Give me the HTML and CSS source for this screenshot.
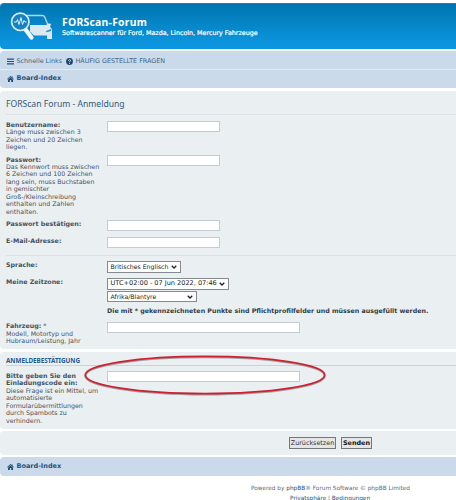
FILE: index.html
```html
<!DOCTYPE html>
<html lang="de">
<head>
<meta charset="utf-8">
<title>FORScan-Forum</title>
<link rel="stylesheet" href="styles.css">
</head>
<body>
<header class="headerbar">
  <svg class="logo" viewBox="0 0 44 32" aria-hidden="true">
    <path d="M17 3.500h15.500q1.500 0 2.200 1.500L38 13" fill="none" stroke="#b5d6e8" stroke-width="1.400"/>
    <path d="M20 13h16l2.500-1.500q2.500-.3 2.500 1L40 14.500q2 2 2 4.500v8h-5v-3.500H24l-4-4z" fill="#dce8ef"/>
    <path d="M36 19l5-2v2l-4.500 1.200z" fill="#2b8fc6"/>
    <path d="M15.500 17.500L21.500 25.500" stroke="#f5fbff" stroke-width="4.200" stroke-linecap="round"/>
    <circle cx="10.300" cy="9.800" r="8.700" fill="#1583c1" stroke="#d9edf7" stroke-width="1.700"/>
    <path d="M4 10h2.500l1-2.500 1.500 5 2-7 1.500 7 1.500-4 1 1.500h1.500" fill="none" stroke="#d9edf7" stroke-width="1"/>
  </svg>
  <div class="site">
    <h1>FORScan-Forum</h1>
    <p>Softwarescanner für Ford, Mazda, Lincoln, Mercury Fahrzeuge</p>
  </div>
</header>
<nav class="navbar">
  <div class="nav-row nav-links">
    <svg class="bars" viewBox="0 0 8 8"><path d="M0 1.200h8M0 4h8M0 6.800h8" stroke="#20527c" stroke-width="1.400"/></svg>
    <a class="quick">Schnelle Links</a>
    <svg class="help" viewBox="0 0 8 8"><circle cx="4" cy="4" r="3.900" fill="#17476e"/><path d="M2.800 3c.2-1.500 2.500-1.300 2.400 0C5.200 3.800 4 3.700 4 4.800M4 5.600v1" fill="none" stroke="#fff" stroke-width="1"/></svg>
    <a class="faq">HÄUFIG GESTELLTE FRAGEN</a>
  </div>
  <div class="nav-row crumb">
    <svg class="home" viewBox="0 0 8 7"><path d="M4 0l1.500 1.300V.5h1v1.700L8 3.600l-.5.500L4 1.100.5 4.100 0 3.600zM4 1.800l2.900 2.500V7H4.800V4.800H3.200V7H1.100V4.300z" fill="#17476e"/></svg>
    <a>Board-Index</a>
  </div>
</nav>
<form>
  <section class="panel main-panel">
    <h2>FORScan Forum - Anmeldung</h2>
    <div class="fields account">
      <div class="label"><b>Benutzername:</b><br>Länge muss zwischen 3<br>Zeichen und 20 Zeichen<br>liegen.</div><input type="text">
      <div class="label"><b>Passwort:</b><br>Das Kennwort muss zwischen<br>6 Zeichen und 100 Zeichen<br>lang sein, muss Buchstaben<br>in gemischter<br>Groß-/Kleinschreibung<br>enthalten und Zahlen<br>enthalten.</div><input type="password">
      <div class="label"><b>Passwort bestätigen:</b></div><input type="password">
      <div class="label"><b>E-Mail-Adresse:</b></div><input type="text">
    </div>
    <div class="fields profile">
      <div class="label"><b>Sprache:</b></div>
      <div class="select language"><span>Britisches Englisch</span><svg viewBox="0 0 6 4"><path d="M.7.700L3 3 5.300.7"/></svg></div>
      <div class="label"><b>Meine Zeitzone:</b></div>
      <div class="zones">
        <div class="select offset"><span>UTC+02:00 - 07 Jun 2022, 07:46</span><svg viewBox="0 0 6 4"><path d="M.7.700L3 3 5.300.7"/></svg></div>
        <div class="select city"><span>Afrika/Blantyre</span><svg viewBox="0 0 6 4"><path d="M.7.700L3 3 5.300.7"/></svg></div>
      </div>
      <p class="notice">Die mit * gekennzeichneten Punkte sind Pflichtprofilfelder und müssen ausgefüllt werden.</p>
      <div class="label vehicle"><b>Fahrzeug:</b> *<br>Modell, Motortyp und<br>Hubraum/Leistung, Jahr</div><input class="wide" type="text">
    </div>
  </section>
  <section class="panel confirm-panel">
    <h3>ANMELDEBESTÄTIGUNG</h3>
    <div class="fields confirm">
      <div class="label"><b>Bitte geben Sie den<br>Einladungscode ein:</b><br>Diese Frage ist ein Mittel, um<br>automatisierte<br>Formularübermittlungen<br>durch Spambots zu<br>verhindern.</div><input class="wide" type="text">
    </div>
    <svg class="marker" viewBox="0 0 246 44"><ellipse cx="121" cy="20" rx="119.700" ry="18.600"/></svg>
  </section>
  <section class="panel actions">
    <button type="reset">Zurücksetzen</button>
    <button type="button" class="submit">Senden</button>
  </section>
</form>
<nav class="footbar crumb">
  <svg class="home" viewBox="0 0 8 7"><path d="M4 0l1.500 1.300V.5h1v1.700L8 3.600l-.5.500L4 1.100.5 4.100 0 3.600zM4 1.800l2.900 2.500V7H4.800V4.800H3.200V7H1.100V4.300z" fill="#17476e"/></svg>
  <a>Board-Index</a>
</nav>
<footer>
  <p>Powered by <a>phpBB</a>® Forum Software © phpBB Limited</p>
  <p class="legal"><a>Privatsphäre</a> | <a>Bedingungen</a></p>
</footer>
</body>
</html>
```
FILE: styles.css
```css
* { box-sizing: border-box; }
body {
  margin: 0;
  padding-top: 3px;
  height: 500px;
  overflow: hidden;
  background: #fff;
  color: #48525d;
  font: 6.3px/7.43px "DejaVu Sans", Verdana, sans-serif;
}
h1, h2, h3, p { margin: 0; white-space: nowrap; }
svg { display: block; flex: none; }
a { color: #24527b; }

.headerbar {
  display: flex;
  height: 46px;
  padding: 8px 0 0 10px;
  border-top: 1px solid #35799e;
  border-radius: 4px 0 0 4px;
  background: linear-gradient(#0075b0, #0c96df 90%, #0c96df);
  color: #fff;
}
.logo { width: 44px; height: 32px; }
.site { padding: 3px 0 0 8px; }
h1 { font: bold 10.4px/14px "Noto Sans", sans-serif; letter-spacing: .25px; }
.site p { font-size: 6.35px; -webkit-text-stroke: .2px #fff; line-height: 7px; }

.navbar {
  height: 37px;
  margin: 2px 0 3px;
  border-radius: 4px 0 0 4px;
  background: #cadaeb;
}
.nav-row { display: flex; align-items: center; height: 18px; padding-left: 7px; }
.nav-links { height: 19px; padding-top: 3px; border-bottom: 1px solid #dfebf5; }
.bars { width: 7px; height: 7px; margin-right: 2.5px; }
.help { width: 7px; height: 7px; margin: 0 3px 0 3.5px; }
.nav-links a { font-size: 6.4px; color: #426486; white-space: nowrap; }
.home { width: 7px; height: 6px; margin-right: 2.5px; }
.crumb a { font-size: 6.5px; font-weight: bold; }

.panel { background: #eaeff2; border-radius: 4px 0 0 4px; padding-left: 6px; }
.main-panel { height: 258px; }
h2 {
  height: 24px;
  padding-top: 8px;
  border-bottom: 1px solid #dce2e5;
  color: #36587b;
  font: 8.6px/10px "Noto Sans", sans-serif;
}
.fields { display: grid; grid-template-columns: 101px 1fr; align-items: start; }
.label { white-space: nowrap; }
.account {
  grid-template-rows: 34.500px 64.500px 17.200px 17px;
  height: 141px;
  padding-top: 6px;
  border-bottom: 1px solid #dce2e5;
}
input {
  width: 113px;
  height: 11px;
  padding: 0 2px;
  border: 1px solid #c5ccd1;
  background: #fff;
  font: inherit;
}
.account input { margin-top: -.4px; }
.wide { width: 193px; height: 11px; }
.profile { grid-template-rows: 17.200px 29px 15px 24px; padding-top: 5px; }
.select {
  display: flex;
  align-items: center;
  justify-content: space-between;
  height: 12px;
  padding: 0 3px 0 2.5px;
  border: 1px solid #858b90;
  background: #fff;
  color: #222;
  font-size: 6.2px;
  white-space: nowrap;
}
.select svg { width: 6px; height: 4px; }
.select path { fill: none; stroke: #222; stroke-width: 1.3; }
.language { width: 74px; }
.zones { display: grid; gap: 1px; }
.offset { width: 122px; font-size: 6.55px; }
.city { width: 90px; height: 11px; }
.notice { grid-column: 2; font-size: 6.3px; font-weight: bold; color: #333c49; }

.confirm-panel { position: relative; height: 77px; margin-top: 3px; }
h3 {
  height: 14px;
  padding-top: 5px;
  border-bottom: 1px solid #ccd3d8;
  color: #255990;
  font: bold 6.3px/8px "Noto Sans", sans-serif;
}
.confirm { padding-top: 6px; }
.confirm input { margin-top: -1px; }
.marker { position: absolute; left: 84px; top: 3px; width: 246px; height: 44px; }
.marker ellipse { fill: none; stroke: #d01f30; stroke-width: 1.8; filter: drop-shadow(.7px 1px .7px #777a); }
.actions { display: flex; gap: 5px; height: 24px; margin: 2px 0; padding: 6px 0 0 289px; }
button {
  width: 47px;
  height: 12px;
  padding: 0;
  border: 1px solid #777;
  background: #e5e5e5;
  color: #333;
  font: 6.4px/9px "DejaVu Sans", sans-serif;
  white-space: nowrap;
}
.submit { width: 31px; font-weight: bold; color: #111; }
.footbar { display: flex; align-items: center; height: 19px; padding-left: 7px; border-radius: 4px 0 0 4px; background: #cadaeb; }
footer { padding: 7px 0 0 251px; font-size: 5.77px; line-height: 10px; color: #667; }
.legal { padding-left: 39px; }
```
